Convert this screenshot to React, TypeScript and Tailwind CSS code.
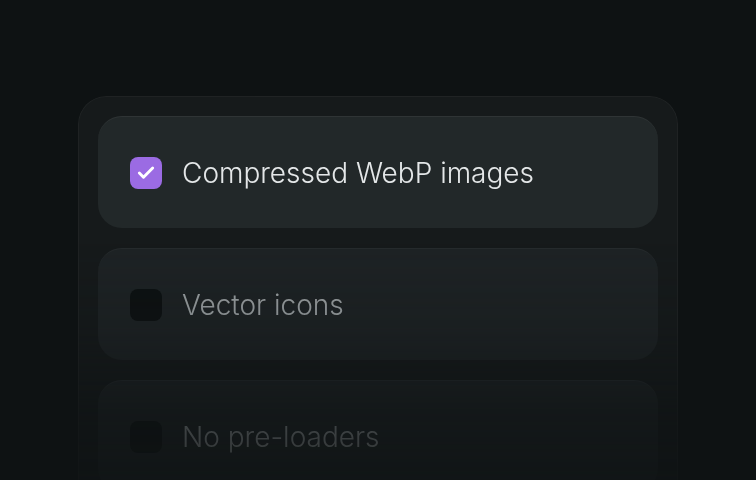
import { Check } from "lucide-react";

type Item = { label: string; checked: boolean };

const ITEMS: Item[] = [
  { label: "Compressed WebP images", checked: true },
  { label: "Vector icons", checked: false },
  { label: "No pre-loaders", checked: false },
];

export default function App() {
  return (
    <div
      className="h-[480px] w-[756px] overflow-hidden bg-[#0e1213] pt-[96px] pl-[78px]"
      style={{ fontFamily: "Inter, 'Noto Sans', sans-serif" }}
    >
      <div className="w-[600px] rounded-t-[28px] border border-b-0 border-white/[0.04] bg-[#161a1b] px-[19px] pt-[19px] pb-10 [mask-image:linear-gradient(to_bottom,black_0px,black_140px,rgba(0,0,0,0.8)_230px,rgba(0,0,0,0.35)_320px,rgba(0,0,0,0.2)_384px)]">
        <ul className="flex flex-col gap-5">
          {ITEMS.map((item) => (
            <li
              key={item.label}
              className={`flex h-[112px] items-center gap-5 rounded-[24px] border-t px-8 ${
                item.checked
                  ? "border-white/[0.06] bg-[#222829]"
                  : "border-white/[0.04] bg-[#1e2325]"
              }`}
            >
              <span
                className={`flex h-8 w-8 shrink-0 items-center justify-center rounded-lg ${
                  item.checked ? "bg-[#9b6be3]" : "bg-[#0d1112]"
                }`}
              >
                {item.checked && (
                  <Check className="h-5 w-5 text-white" strokeWidth={3.5} />
                )}
              </span>
              <span
                className={`text-[28px] font-[350] ${
                  item.checked ? "text-[#e4e7e8]" : "text-[#a0a6a8]"
                }`}
              >
                {item.label}
              </span>
            </li>
          ))}
        </ul>
      </div>
    </div>
  );
}
